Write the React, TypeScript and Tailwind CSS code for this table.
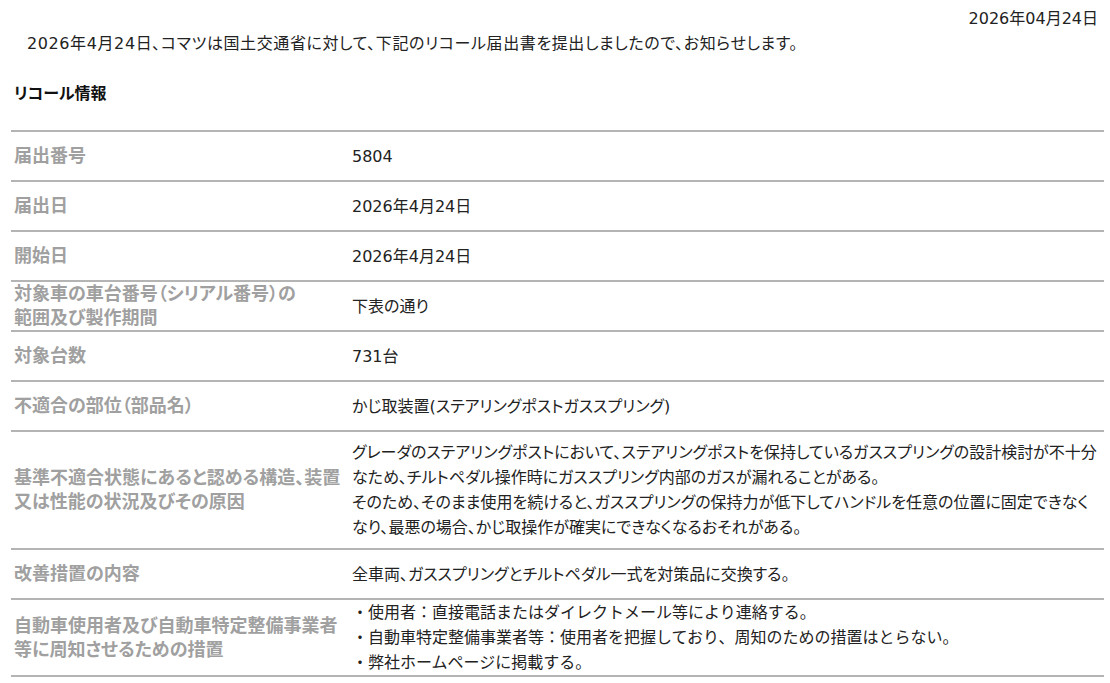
const rows: { label: string[]; value: string[]; pad: string; palt: boolean }[] = [
  { label: ["届出番号"], value: ["5804"], pad: "py-[5px]", palt: true },
  { label: ["届出日"], value: ["2026年4月24日"], pad: "py-[5px]", palt: true },
  { label: ["開始日"], value: ["2026年4月24日"], pad: "py-[5px]", palt: true },
  { label: ["対象車の車台番号（シリアル番号）の", "範囲及び製作期間"], value: ["下表の通り"], pad: "py-[0px]", palt: true },
  { label: ["対象台数"], value: ["731台"], pad: "py-[5px]", palt: true },
  { label: ["不適合の部位（部品名）"], value: ["かじ取装置(ステアリングポストガススプリング)"], pad: "py-[5px]", palt: true },
  {
    label: ["基準不適合状態にあると認める構造、装置", "又は性能の状況及びその原因"],
    value: [
      "グレーダのステアリングポストにおいて、ステアリングポストを保持しているガススプリングの設計検討が不十分",
      "なため、チルトペダル操作時にガススプリング内部のガスが漏れることがある。",
      "そのため、そのまま使用を続けると、ガススプリングの保持力が低下してハンドルを任意の位置に固定できなく",
      "なり、最悪の場合、かじ取操作が確実にできなくなるおそれがある。",
    ],
    pad: "py-[8px]",
    palt: true,
  },
  { label: ["改善措置の内容"], value: ["全車両、ガススプリングとチルトペダル一式を対策品に交換する。"], pad: "py-[5px]", palt: true },
  {
    label: ["自動車使用者及び自動車特定整備事業者", "等に周知させるための措置"],
    value: [
      "・使用者：直接電話またはダイレクトメール等により連絡する。",
      "・自動車特定整備事業者等：使用者を把握しており、周知のための措置はとらない。",
      "・弊社ホームページに掲載する。",
    ],
    pad: "py-[0px]",
    palt: false,
  },
];

export default function App() {
  return (
    <div
      className="w-[1110px] h-[683px] overflow-hidden bg-white text-[#222] [font-feature-settings:'palt']"
      style={{ fontFamily: "'DejaVu Sans', 'Noto Sans CJK JP', sans-serif" }}
    >
      <div className="pt-[7px] pr-[12px] text-right text-[16px] leading-[24px]">2026年04月24日</div>
      <p className="pl-[27px] text-[16px] leading-[24px] mt-[1px] tracking-[0.6px]">
        2026年4月24日、コマツは国土交通省に対して、下記のリコール届出書を提出しましたので、お知らせします。
      </p>
      <h2 className="pl-[14px] mt-[26px] text-[16px] font-bold leading-[24px] text-[#111]">リコール情報</h2>
      <div className="mx-[11px] mt-[24px] w-[1093px] border-t-2 border-[#b4b4b4]">
        {rows.map((r, i) => (
          <div key={i} className="flex min-h-[50px] border-b-2 border-[#b4b4b4]">
            <div className="w-[341px] shrink-0 flex flex-col justify-center pl-[3px] text-[18px] font-bold leading-[24px] text-[#a0a0a0]">
              {r.label.map((l, j) => (
                <span key={j} className="whitespace-nowrap">{l}</span>
              ))}
            </div>
            <div
              className={
                "flex-1 flex flex-col justify-center text-[16px] leading-[25px] " +
                r.pad +
                (r.palt ? "" : " [font-feature-settings:normal]")
              }
            >
              {r.value.map((v, j) => (
                <span key={j} className="whitespace-nowrap">{v}</span>
              ))}
            </div>
          </div>
        ))}
      </div>
    </div>
  );
}
